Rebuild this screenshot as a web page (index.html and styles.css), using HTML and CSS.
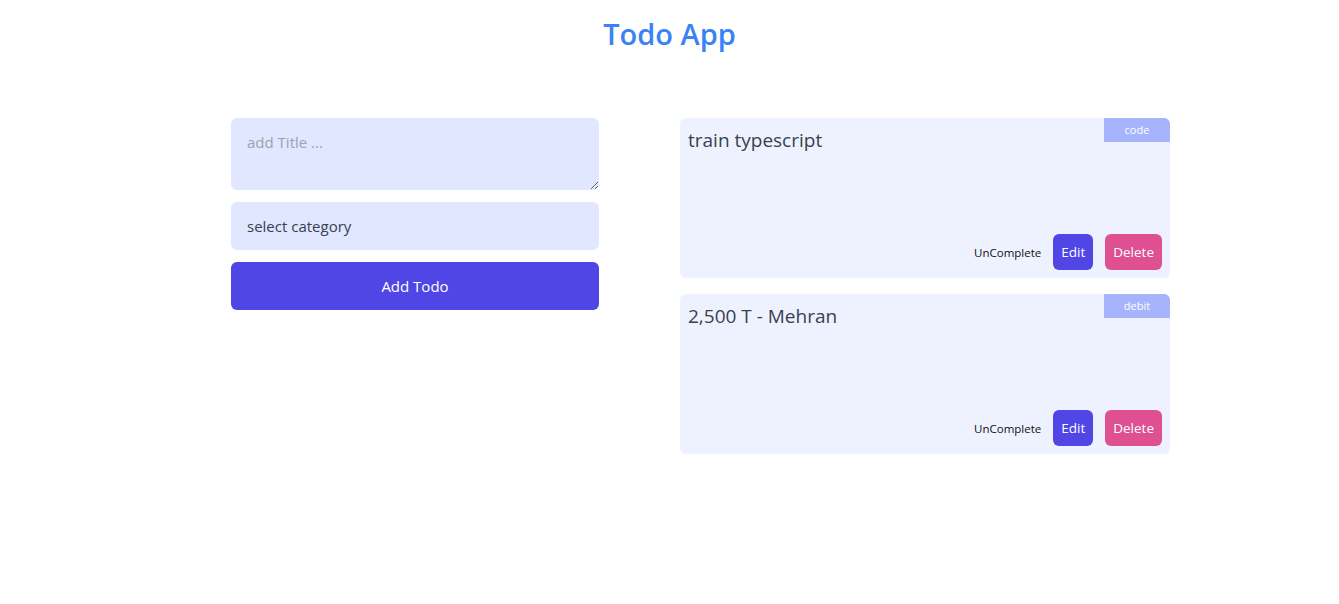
FILE: index.html
```html
<!DOCTYPE html>
<html>
<head>
<meta charset="utf-8">
<link rel="stylesheet" href="styles.css">
</head>
<body>
<h1 class="title">Todo App</h1>
<main class="layout">
  <form class="form">
    <textarea class="field field-area" placeholder="add Title ..."></textarea>
    <div class="field field-select">select category</div>
    <button type="button" class="add-btn">Add Todo</button>
  </form>
  <section class="list">
    <article class="card">
      <span class="badge">code</span>
      <p class="card-title">train typescript</p>
      <div class="card-actions">
        <span class="status">UnComplete</span>
        <button type="button" class="btn btn-edit">Edit</button>
        <button type="button" class="btn btn-delete">Delete</button>
      </div>
    </article>
    <article class="card">
      <span class="badge">debit</span>
      <p class="card-title">2,500 T - Mehran</p>
      <div class="card-actions">
        <span class="status">UnComplete</span>
        <button type="button" class="btn btn-edit">Edit</button>
        <button type="button" class="btn btn-delete">Delete</button>
      </div>
    </article>
  </section>
</main>
</body>
</html>
```

FILE: styles.css
```css
* { box-sizing: border-box; }
html, body { margin: 0; padding: 0; background: #fff; }
body {
  font-family: "Open Sans", "Noto Sans", sans-serif;
  color: #374151;
}
.title {
  margin: 0;
  padding-top: 14px;
  height: 118px;
  text-align: center;
  font-size: 29px;
  font-weight: 600;
  color: #3b82f6;
  line-height: 40px;
}
.layout {
  display: flex;
  align-items: flex-start;
  gap: 81px;
  padding-left: 231px;
}
.form {
  width: 368px;
  display: flex;
  flex-direction: column;
  gap: 12px;
}
.field {
  width: 100%;
  border: none;
  border-radius: 6px;
  background: #e0e7ff;
  font-family: inherit;
  font-size: 15px;
  color: #374151;
  padding: 0 16px;
}
.field-area {
  height: 72px;
  padding-top: 14px;
  resize: vertical;
  outline: none;
  display: block;
}
.field-area::placeholder { color: #9ca3af; }
.field-select {
  height: 48px;
  display: flex;
  align-items: center;
}
.add-btn {
  height: 48px;
  border: none;
  border-radius: 6px;
  background: #4f46e5;
  color: #fff;
  font-family: inherit;
  font-size: 15px;
}
.list {
  width: 490px;
  display: flex;
  flex-direction: column;
  gap: 16px;
}
.card {
  position: relative;
  height: 160px;
  background: #eef2ff;
  border-radius: 6px;
  padding: 8px 8px 8px 8px;
  display: flex;
  flex-direction: column;
  justify-content: space-between;
}
.badge {
  position: absolute;
  top: 0;
  right: 0;
  width: 66px;
  height: 24px;
  background: #a5b4fc;
  color: #fff;
  font-size: 11px;
  line-height: 24px;
  text-align: center;
  border-top-right-radius: 6px;
}
.card-title {
  margin: 0;
  font-size: 19px;
  line-height: 28px;
  color: #374151;
}
.card-actions {
  display: flex;
  justify-content: flex-end;
  align-items: center;
  gap: 12px;
}
.status {
  font-size: 11.5px;
  color: #111;
}
.btn {
  height: 36px;
  border: none;
  border-radius: 6px;
  color: #fff;
  font-family: inherit;
  font-size: 13.5px;
  padding: 0 8px;
}
.btn-edit { background: #4f46e5; }
.btn-delete { background: #de5091; }
```
